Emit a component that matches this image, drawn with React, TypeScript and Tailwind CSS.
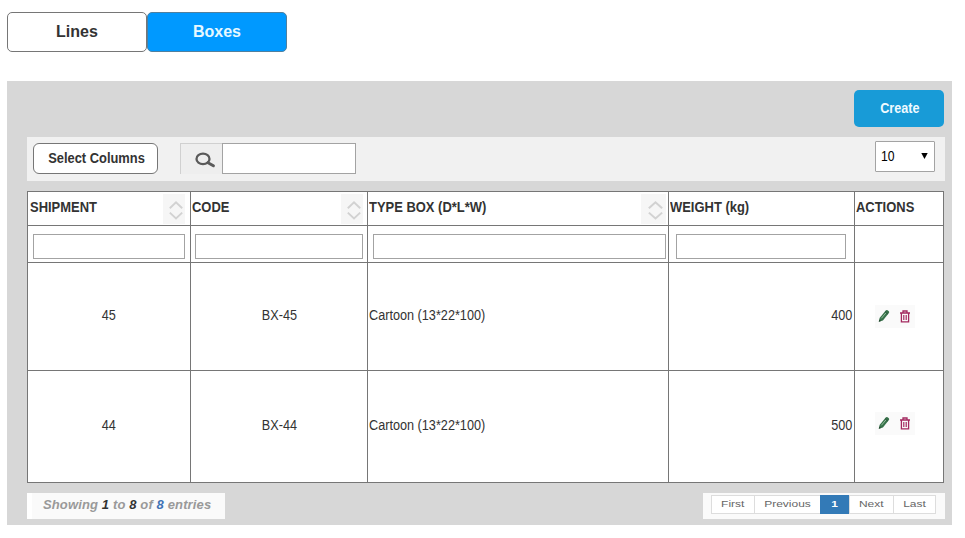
import React from "react";

const SortIcon = ({ wide = false }: { wide?: boolean }) => (
  <span className={`flex h-[30px] items-center bg-[#f6f6f6] pt-[1px] ${wide ? "w-[25px] pl-[7px]" : "w-[22px] pl-[6px]"}`}>
    <svg width={wide ? 15 : 14} height="20" viewBox="0 0 14 20" preserveAspectRatio="none" fill="none" stroke="#d2d2d2" strokeWidth="1.9">
      <path d="M0.8 8.2 7 2.2l6.2 6M0.8 12.6 7 18.4l6.2-5.8" />
    </svg>
  </span>
);

const PencilIcon = () => (
  <svg width="12" height="14" viewBox="0 0 12 14">
    <path d="M.8 12.8 1.6 8.9 7.7 1.5Q8.6.5 9.6 1.3L10.8 2.3Q11.6 3.1 10.9 4.1L4.9 11.4Z" fill="#37714a" />
    <path d="M3.4 9.3 8 3.8" stroke="#93bf9b" strokeWidth="1" />
    <path d="M7.1 2.7 9.9 5.1" stroke="#27523a" strokeWidth="0.9" />
    <path d="M.8 12.8 1.3 10.5 3.1 12.1Z" fill="#24472f" />
  </svg>
);

const TrashIcon = () => (
  <svg width="10" height="13" viewBox="0 0 10 13" fill="none" stroke="#a3285f">
    <path d="M0 3h10M3 2.8V1h4v1.8M1.4 3v8.9h7.2V3" strokeWidth="1.3" />
    <path d="M3.5 5v5M5 5v5M6.5 5v5" strokeWidth="0.8" />
  </svg>
);

const cell = "border-r border-b border-[#767676]";
const input = "h-[25px] rounded-none border border-[#a3a3a3] bg-white outline-none";
const value = "inline-block scale-x-[0.905] text-[14px] whitespace-nowrap";

const columns = [
  { label: "SHIPMENT", pad: "pl-[2px]", sort: "pr-[5px]", sortable: true, wide: false },
  { label: "CODE", pad: "pl-[1px]", sort: "pr-[4px]", sortable: true, wide: false },
  { label: "TYPE BOX (D*L*W)", pad: "pl-[1px]", sort: "pr-[2px]", sortable: true, wide: true },
  { label: "WEIGHT (kg)", pad: "pl-[1px]", sort: "", sortable: false, wide: false },
  { label: "ACTIONS", pad: "pl-[1px]", sort: "", sortable: false, wide: false },
];

const rows = [
  { shipment: "45", code: "BX-45", type: "Cartoon (13*22*100)", weight: "400", text: "pt-[42px]", icons: "mt-[42px]" },
  { shipment: "44", code: "BX-44", type: "Cartoon (13*22*100)", weight: "500", text: "pt-[44px]", icons: "mt-[41px]" },
];

const pages = [
  { label: "First", w: "w-[43px]" },
  { label: "Previous", w: "w-[66px]" },
  { label: "1", w: "w-[29px]" },
  { label: "Next", w: "w-[44px]" },
  { label: "Last", w: "w-[43px]" },
];

export default function App() {
  return (
    <div className="h-[538px] w-[965px] bg-white pt-[12px] pl-[7px] font-['Liberation_Sans',Arial,sans-serif] text-[13px] leading-[20px] text-[#333]">
      <div className="flex">
        <button className="h-[40px] w-[140px] rounded-[5px] border border-[#767676] bg-white text-[16px] font-bold">Lines</button>
        <button className="h-[40px] w-[140px] rounded-[5px] border border-[#50809f] bg-[#0099ff] text-[16px] font-bold text-[#e6f8ff]">Boxes</button>
      </div>

      <div className="mt-[29px] h-[444px] w-[945px] bg-[#d7d7d7] pt-[9px] pl-[20px]">
        <div className="flex justify-end pr-[8px]">
          <button className="h-[37px] w-[90px] rounded-[5px] bg-[#189bd7] pl-[1px] text-[#f0faff]">
            <span className="inline-block scale-x-[0.9] text-[14px] font-bold">Create</span>
          </button>
        </div>

        <div className="mt-[10px] flex h-[44px] w-[918px] items-start bg-[#f1f1f1] pt-[4px] pl-[6px]">
          <button className="mt-[2px] h-[31px] w-[125px] rounded-[6px] border border-[#767676] bg-white pl-[2px]">
            <span className="inline-block scale-x-[0.92] text-[14px] font-bold whitespace-nowrap">Select Columns</span>
          </button>
          <div className="mt-[2px] ml-[22px] flex h-[31px]">
            <span className="flex w-[42px] items-center border-t border-l border-[#d0d0d0] bg-[#eee] pt-[2px] pl-[14px]">
              <svg width="21" height="16" viewBox="0 0 21 16" fill="none" stroke="#5a5a5a">
                <ellipse cx="8" cy="6.9" rx="6.5" ry="5.2" strokeWidth="2.3" />
                <path d="m13 10.8 5.4 3" strokeWidth="3" strokeLinecap="round" />
              </svg>
            </span>
            <input aria-label="Search" className="w-[134px] rounded-none border border-[#a3a3a3] bg-white outline-none" />
          </div>
          <div className="mr-[10px] ml-auto flex h-[31px] w-[60px] items-center justify-between rounded-[1px] border border-[#a3a3a3] bg-white pr-[6px] pb-[2px] pl-[5px] text-black">
            <span className="origin-left scale-x-[0.87] text-[14px]">10</span>
            <svg width="7" height="6" viewBox="0 0 7 6"><path d="M.3 0h6.4L3.5 6Z" /></svg>
          </div>
        </div>

        <div className="mt-[10px] grid w-[917px] grid-cols-[163px_177px_301px_186px_89px] grid-rows-[34px_37px_108px_112px] border-t border-l border-[#767676] bg-white">
          {columns.map((c) => (
            <div key={c.label} className={`${cell} ${c.pad} ${c.sort} flex justify-between font-bold`}>
              <span className="origin-left scale-x-[0.925] pt-[5px] text-[14px] whitespace-nowrap">{c.label}</span>
              {c.sortable && <span className="pt-[2px]"><SortIcon wide={c.wide} /></span>}
            </div>
          ))}

          <div className={`${cell} pt-[8px] pl-[5px]`}><input aria-label="Shipment" className={`${input} block w-[152px]`} /></div>
          <div className={`${cell} pt-[8px] pl-[4px]`}><input aria-label="Code" className={`${input} block w-[168px]`} /></div>
          <div className={`${cell} pt-[8px] pl-[5px]`}><input aria-label="Type box" className={`${input} block w-[293px]`} /></div>
          <div className={`${cell} pt-[8px] pl-[7px]`}><input aria-label="Weight" className={`${input} block w-[170px]`} /></div>
          <div className={cell} />

          {rows.map((r) => (
            <React.Fragment key={r.code}>
              <div className={`${cell} ${r.text} text-center`}><span className={value}>{r.shipment}</span></div>
              <div className={`${cell} ${r.text} text-center`}><span className={value}>{r.code}</span></div>
              <div className={`${cell} ${r.text} pl-[1px]`}><span className={`${value} origin-left`}>{r.type}</span></div>
              <div className={`${cell} ${r.text} pr-[2px] text-right`}><span className={`${value} origin-right`}>{r.weight}</span></div>
              <div className={cell}>
                <div className={`${r.icons} ml-[20px] flex h-[23px] w-[40px] items-center gap-[10px] bg-[#fafafa] pb-[1px] pl-[3px]`}>
                  <PencilIcon />
                  <TrashIcon />
                </div>
              </div>
            </React.Fragment>
          ))}
        </div>

        <div className="mt-[10px] flex w-[918px] justify-between">
          <div className="h-[26px] w-[198px] border-l-[5px] border-white bg-[#fafafa] pt-[2px] pl-[11px] text-[13px] font-bold tracking-[0.13px] whitespace-nowrap text-[#999] italic">
            Showing <span className="text-[#333]">1</span> to <span className="text-[#333]">8</span> of <span className="text-[#3f73b5]">8</span> entries
          </div>
          <div className="h-[26px] w-[242px] bg-[#fafafa] pt-[2px] pl-[8px]">
            <div className="flex h-[19px] w-[225px]">
              {pages.map((p) => (
                <button
                  key={p.label}
                  className={`${p.w} flex items-center justify-center text-[9px] leading-none ${
                    p.label === "1" ? "bg-[#337ab7] font-bold text-white" : "border-y border-l border-[#ddd] bg-white text-[#666] last:border-r"
                  }`}
                >
                  <span className="scale-x-[1.33]">{p.label}</span>
                </button>
              ))}
            </div>
          </div>
        </div>
      </div>
    </div>
  );
}
